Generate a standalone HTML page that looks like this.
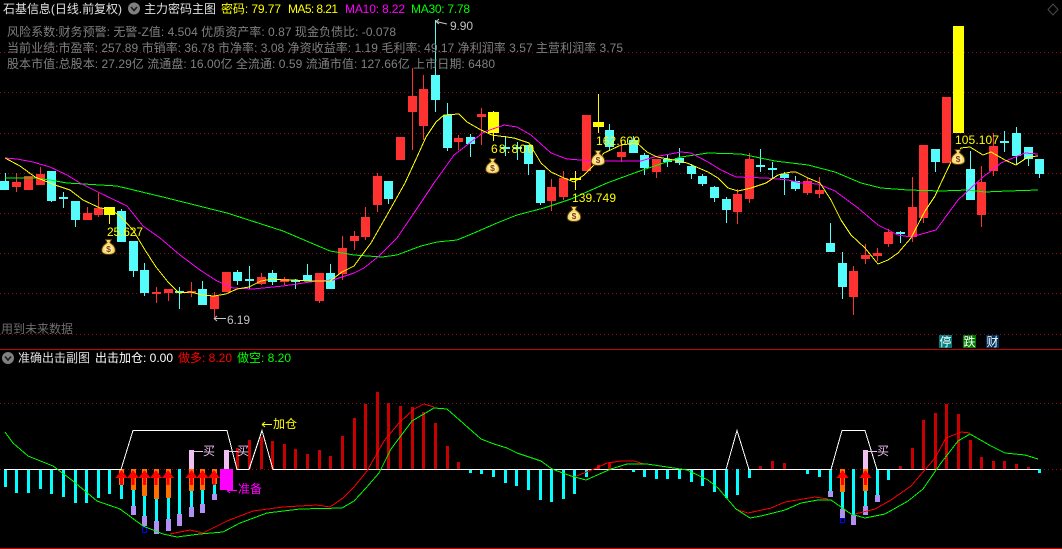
<!DOCTYPE html>
<html lang="zh-CN">
<head>
<meta charset="utf-8">
<title>主力密码主图</title>
<style>
html,body{margin:0;padding:0;background:#000;width:1062px;height:549px;overflow:hidden}
svg{display:block;position:absolute;left:0;top:0}
text{font-family:"Liberation Sans","WenQuanYi Zen Hei","Noto Sans CJK SC",sans-serif;font-size:12px}
.l{fill:none;stroke-width:1;shape-rendering:crispEdges}
.w{fill:none;stroke-width:1;shape-rendering:crispEdges}
.b{shape-rendering:crispEdges}
</style>
</head>
<body>
<svg width="1062" height="549" viewBox="0 0 1062 549" xmlns="http://www.w3.org/2000/svg">
<defs>
<g id="bag">
<path d="M-3 -7.500L3 -7.500L1.500 -4.500L5 -1.500Q7.500 2 6.500 5Q5 7.500 0 7.500Q-5 7.500 -6.500 5Q-7.500 2 -5 -1.500L-1.500 -4.500Z" fill="#F7D964" stroke="#5A3A14" stroke-width="1"/>
<ellipse cx="0" cy="2" rx="4.200" ry="4" fill="#FFF0A8"/>
<text x="0" y="5" text-anchor="middle" fill="#8B3A10" style="font-size:8.500px;font-weight:bold">$</text>
</g>
<g id="arw"><path class="b" fill="#FF0000" d="M0 470L6 478H1.500V485H-1.500V478H-6Z"/></g>
</defs>

<!-- grid -->
<path d="M0 52.500H1062M0 92.500H1062M0 133.500H1062M0 173.500H1062M0 213.500H1062M0 253.500H1062M0 293.500H1062M0 334.500H1062M0 403.500H1062M0 469.500H1062" stroke="#8A0F0F" stroke-width="1" stroke-dasharray="1 3" fill="none" shape-rendering="crispEdges"/>
<path d="M0 349.500H1062M0 548.500H1062" stroke="#C80000" stroke-width="1" fill="none" shape-rendering="crispEdges"/>

<!-- cyan wicks -->
<path class="w" stroke="#54FCFC" d="M5.500 173V190M51.500 171V202M63.500 192V208M75.500 201V227M121.500 209V242M133.500 241V277M144.500 263V296M179.500 287V309M202.500 281V305M237.500 270V285M249.500 266V289M272.500 270V285M295.500 279V289M307.500 264V281M330.500 264V289M388.500 181V204M435.500 20V112M447.500 103V151M470.500 134V157M505.500 136V156M517.500 142V160M528.500 145V175M540.500 170V205M609.500 124V150M633.500 136V153M644.500 153V175M667.500 154V167M679.500 148V165M691.500 164V179M702.500 174V186M714.500 186V202M726.500 197V223M760.500 149V172M772.500 162V179M784.500 172V195M795.500 176V191M830.500 223V252M842.500 252V299M900.500 231V243M935.500 149V172M970.500 151V200M1004.500 131V152M1016.500 127V164M1028.500 147V166M1039.500 159V178"/>
<!-- red wicks -->
<path class="w" stroke="#FF3232" d="M16.500 173V192M40.500 167V185M87.500 207V220M98.500 193V217M156.500 287V303M168.500 289V301M191.500 282V297M214.500 292V317M261.500 273V285M284.500 277V285M319.500 273V303M342.500 236V280M354.500 231V250M365.500 207V240M377.500 173V212M412.500 68V150M423.500 75V140M458.500 135V150M481.500 108V145M551.500 179V211M563.500 171V200M621.500 140V162M656.500 159V178M737.500 189V224M749.500 153V203M807.500 178V195M819.500 177V198M853.500 266V315M865.500 244V264M877.500 248V261M888.500 229V247M912.500 177V242M923.500 145V223M981.500 166V227M993.500 133V176"/>
<!-- yellow wicks -->
<path class="w" stroke="#FFFF00" d="M109.500 207V224M493.500 111V141M575.500 171V190M598.500 94V133"/>

<!-- cyan bodies -->
<path class="b" fill="#54FCFC" d="M0 181h9v9h-9zM47 171h9v30h-9zM59 197h9v2h-9zM71 201h9v19h-9zM117 211h9v31h-9zM129 241h9v30h-9zM140 270h9v23h-9zM175 291h9v2h-9zM198 289h9v16h-9zM233 272h9v9h-9zM245 279h9v2h-9zM268 273h9v9h-9zM291 280h9v2h-9zM303 275h9v6h-9zM326 273h9v16h-9zM384 181h9v18h-9zM431 75h9v25h-9zM443 115h9v33h-9zM466 137h9v7h-9zM501 147h9v2h-9zM513 147h9v2h-9zM524 145h9v19h-9zM536 170h9v33h-9zM605 130h9v17h-9zM629 140h9v13h-9zM640 155h9v13h-9zM663 159h9v3h-9zM675 158h9v5h-9zM687 166h9v8h-9zM698 176h9v8h-9zM710 187h9v11h-9zM722 199h9v11h-9zM756 165h9v2h-9zM768 168h9v2h-9zM780 174h9v4h-9zM791 181h9v8h-9zM826 243h9v9h-9zM838 263h9v24h-9zM896 232h9v2h-9zM931 149h9v13h-9zM966 169h9v31h-9zM1000 141h9v2h-9zM1012 133h9v23h-9zM1024 147h9v12h-9zM1035 159h9v15h-9z"/>
<!-- red bodies -->
<path class="b" fill="#FF3232" d="M12 182h9v5h-9zM24 176h9v14h-9zM36 174h9v11h-9zM83 213h9v7h-9zM94 208h9v7h-9zM152 292h9v2h-9zM164 289h9v4h-9zM187 291h9v2h-9zM210 296h9v13h-9zM222 272h9v20h-9zM257 277h9v7h-9zM280 279h9v3h-9zM315 273h9v28h-9zM338 248h9v26h-9zM350 236h9v5h-9zM361 217h9v20h-9zM373 176h9v29h-9zM396 137h9v23h-9zM408 96h9v16h-9zM419 89h9v37h-9zM454 138h9v4h-9zM477 114h9v3h-9zM547 187h9v14h-9zM559 178h9v19h-9zM582 115h9v56h-9zM617 152h9v5h-9zM652 159h9v13h-9zM733 194h9v18h-9zM745 159h9v40h-9zM803 181h9v12h-9zM815 190h9v4h-9zM849 271h9v26h-9zM861 255h9v4h-9zM873 253h9v3h-9zM884 232h9v12h-9zM908 207h9v30h-9zM919 145h9v73h-9zM942 97h9v66h-9zM977 182h9v33h-9zM989 146h9v25h-9z"/>
<!-- yellow bodies -->
<path class="b" fill="#FFFF00" d="M104 207h11v8h-11zM488 112h11v21h-11zM570 178h11v2h-11zM593 122h11v5h-11zM953 26h11v107h-11z"/>

<!-- MA30 -->
<polyline class="l" stroke="#00FF00" points="5,178 35,178 50,180 67,183 117,186 167,198 227,213 283,231 330,251 354,255 382,257 397,255 421,246 437,242 457,240 474,233 497,223 517,215 544,208 571,199 607,183 637,172 681,157 708,153 741,154 775,161 808,165 835,172 861,183 881,188 908,190 941,191 968,190 985,192 1008,191 1038,190"/>
<!-- MA10 -->
<polyline class="l" stroke="#FF00FF" points="5,158 17,159 33,162 50,167 67,175 80,183 100,193 127,206 143,226 160,238 180,255 200,270 217,281 233,288 253,289 283,286 317,281 333,280 354,273 364,268 379,256 397,238 414,213 434,183 454,155 484,132 504,125 517,127 531,135 551,153 567,159 594,161 641,161 654,157 681,152 691,153 708,162 721,170 736,177 766,178 788,180 801,183 818,184 835,191 858,208 878,225 898,235 911,237 936,230 958,200 983,177 1001,163 1025,153 1038,154"/>
<!-- MA5 -->
<polyline class="l" stroke="#FFFF00" points="5,158 20,166 35,177 50,183 58,186 70,190 83,200 100,208 110,209 120,216 133,230 145,250 156,267 168,282 179,293 191,292 202,295 214,296 226,294 237,289 249,287 261,281 272,279 284,280 295,280 307,281 319,281 330,281 342,272 354,266 362,255 371,243 387,215 405,183 417,157 426,137 436,122 444,115 459,114 467,122 481,130 492,135 514,138 529,143 541,163 551,172 564,178 574,182 584,175 594,165 604,153 621,145 637,143 647,152 657,157 674,160 687,163 708,172 718,178 723,183 728,188 738,191 751,188 766,183 778,175 791,172 796,172 808,178 820,183 831,200 841,220 851,235 865,248 878,264 888,260 898,253 911,238 925,211 935,196 941,183 951,162 961,148 970,147 983,155 991,152 1005,160 1016,165 1028,157 1038,156"/>

<!-- money bags -->
<use href="#bag" x="108.500" y="247"/>
<use href="#bag" x="492.500" y="166"/>
<use href="#bag" x="598" y="158"/>
<use href="#bag" x="574" y="214"/>
<use href="#bag" x="958" y="157"/>

<!-- price labels -->
<text x="107" y="236" fill="#FFFF00" textLength="36">25.627</text>
<text x="491" y="153" fill="#FFFF00" textLength="43">68.800</text>
<text x="596" y="145" fill="#FFFF00" textLength="44">162.609</text>
<text x="572" y="202" fill="#FFFF00" textLength="44">139.749</text>
<text x="955" y="144" fill="#FFFF00" textLength="44">105.107</text>
<path d="M436 21.500L447 24M436 21.500L439 19M436 21.500L439 24" stroke="#C8C8C8" fill="none"/>
<text x="450" y="30" fill="#C0C0C0" textLength="23">9.90</text>
<path d="M214 318.500H226M214 318.500L217 316M214 318.500L217 321" stroke="#C8C8C8" fill="none"/>
<text x="227" y="324" fill="#C0C0C0" textLength="23">6.19</text>

<!-- top header -->
<text x="3" y="13" fill="#E0E0E0" textLength="119">石基信息(日线.前复权)</text>
<circle cx="134" cy="8.500" r="6" fill="#808080"/>
<path d="M131 7L134 10.500L137 7" stroke="#1a1a1a" stroke-width="1.600" fill="none"/>
<text x="144" y="13" fill="#E0E0E0" textLength="72">主力密码主图</text>
<text x="221" y="13" fill="#FFFF00" textLength="60">密码: 79.77</text>
<text x="288" y="13" fill="#FFFF00" textLength="50">MA5: 8.21</text>
<text x="345" y="13" fill="#FF00FF" textLength="60">MA10: 8.22</text>
<text x="411" y="13" fill="#00FF00" textLength="59">MA30: 7.78</text>
<text x="7" y="36" fill="#808080" textLength="389">风险系数:财务预警: 无警-Z值: 4.504 优质资产率: 0.87 现金负债比: -0.078</text>
<text x="7" y="52" fill="#808080" textLength="616">当前业绩:市盈率: 257.89 市销率: 36.78 市净率: 3.08 净资收益率: 1.19 毛利率: 49.17 净利润率 3.57 主营利润率 3.75</text>
<text x="7" y="68" fill="#808080" textLength="488">股本市值:总股本: 27.29亿 流通盘: 16.00亿 全流通: 0.59 流通市值: 127.66亿 上市日期: 6480</text>
<path d="M1053 4L1058 9.500L1053 15L1048 9.500Z" fill="none" stroke="#4a4a4a"/>

<text x="1" y="333" fill="#6e6e6e" textLength="72">用到未来数据</text>

<!-- badges -->
<rect x="939" y="335" width="13" height="13" fill="#007C7C"/>
<rect x="963" y="335" width="13" height="13" fill="#007A00"/>
<rect x="986" y="335" width="13" height="13" fill="#00305E"/>
<text x="939.500" y="346" fill="#fff" textLength="12">停</text>
<text x="963.500" y="346" fill="#fff" textLength="12">跌</text>
<text x="986.500" y="346" fill="#fff" textLength="12">财</text>

<!-- sub header -->
<circle cx="8" cy="358" r="6" fill="#808080"/>
<path d="M5 356.500L8 360L11 356.500" stroke="#1a1a1a" stroke-width="1.600" fill="none"/>
<text x="18" y="362" fill="#E0E0E0" textLength="72">准确出击副图</text>
<text x="95" y="362" fill="#FFFFFF" textLength="78">出击加仓: 0.00</text>
<text x="178" y="362" fill="#FF0000" textLength="54">做多: 8.20</text>
<text x="237" y="362" fill="#00FF00" textLength="54">做空: 8.20</text>

<!-- sub chart bars: pink -->
<path class="b" fill="#F0C0F0" d="M189 450h5v19h-5zM224 450h5v19h-5zM863 450h5v19h-5z"/>
<!-- red bars -->
<path class="w" stroke="#C80000" style="stroke-width:3" d="M237.500 448V469M249.500 440V469M261.500 437V469M272.500 441V469M284.500 444V469M295.500 449V469M307.500 454V469M319.500 450V469M330.500 456V469M342.500 436V469M354.500 418V469M365.500 404V469M377.500 392V469M388.500 403V469M400.500 406V469M412.500 407V469M423.500 412V469M435.500 423V469M447.500 446V469M458.500 462V469M598.500 465V469M609.500 463V469M621.500 468V469M760.500 466V469M772.500 461V469M784.500 463V469M900.500 466V469M912.500 448V469M923.500 420V469M935.500 413V469M946.500 404V469M958.500 414V469M970.500 440V469M981.500 457V469M993.500 461V469M1004.500 461V469M1016.500 464V469M1028.500 467V469"/>
<!-- cyan bars -->
<path class="w" stroke="#00FFFF" style="stroke-width:3" d="M5.500 469V487M16.500 469V493M28.500 469V493M40.500 469V489M51.500 469V494M63.500 469V497M75.500 469V503M86.500 469V503M98.500 469V498M109.500 469V494M121.500 469V499M133.500 469V506M144.500 469V516M156.500 469V521M168.500 469V519M179.500 469V514M191.500 469V507M202.500 469V504M214.500 469V494M470.500 469V473M481.500 469V474M493.500 469V477M505.500 469V483M516.500 469V486M528.500 469V490M540.500 469V500M551.500 469V502M563.500 469V499M574.500 469V494M586.500 469V477M633.500 469V472M644.500 469V477M656.500 469V479M667.500 469V479M679.500 469V479M691.500 469V482M702.500 469V486M714.500 469V492M726.500 469V498M737.500 469V495M749.500 469V478M807.500 469V474M819.500 469V477M830.500 469V491M842.500 469V509M853.500 469V515M865.500 469V506M877.500 469V495M888.500 469V480M1039.500 469V473"/>
<!-- purple -->
<path class="b" fill="#B090F0" d="M131 506h5v9h-5zM142 516h5v10h-5zM154 521h5v13h-5zM166 519h5v12h-5zM177 514h5v12h-5zM189 507h5v10h-5zM200 504h5v9h-5zM212 494h5v6h-5zM828 491h5v6h-5zM840 509h5v9h-5zM851 515h5v10h-5zM863 506h5v9h-5zM875 495h5v7h-5z"/>
<!-- orange -->
<path class="b" fill="#FF7000" d="M119 469h5v16h-5zM131 469h5v21h-5zM142 469h5v27h-5zM154 469h5v30h-5zM166 469h5v29h-5zM189 469h5v22h-5zM200 469h5v21h-5zM212 469h5v15h-5zM840 469h5v23h-5zM863 469h5v22h-5z"/>
<!-- magenta block -->
<rect class="b" x="220" y="469" width="13" height="21" fill="#FF00FF"/>
<!-- blue markers -->
<path class="b" fill="none" stroke="#0000FF" d="M142.500 527.500h4v5h-4zM840.500 518.500h4v4h-4z"/>
<!-- arrows -->
<use href="#arw" x="121.500"/><use href="#arw" x="133"/><use href="#arw" x="144.500"/><use href="#arw" x="156"/><use href="#arw" x="168"/><use href="#arw" x="191.500"/><use href="#arw" x="202.500"/><use href="#arw" x="214"/><use href="#arw" x="842.500"/><use href="#arw" x="865.500"/>

<!-- zero / trapezoid white line -->
<polyline fill="none" stroke="#FFFFFF" stroke-width="1" shape-rendering="crispEdges" points="4,469.500 121,469.500 133,430.500 227,430.500 237,469.500 249,469.500 262,430.500 273,469.500 726,469.500 737,430.500 749,469.500 831,469.500 842,430.500 865,430.500 877,469.500 1039,469.500"/>

<!-- sub lines -->
<polyline class="l" stroke="#FF0000" points="170,534 190,530 203,533 227,521 253,511 283,507 317,505 330,507 343,498 354,487 367,471 384,441 399,423 414,409 424,404 434,407"/>
<polyline class="l" stroke="#FF0000" points="574,477 594,469 607,463 621,461 634,461 644,464"/>
<polyline class="l" stroke="#FF0000" points="738,510 748,513 771,508 785,502 815,497 828,499"/>
<polyline class="l" stroke="#FF0000" points="855,514 875,509 891,500 911,486 935,458 946,438 961,432 970,433"/>
<polyline class="l" stroke="#00FF00" points="5,432 13,443 28,456 53,466 73,481 97,501 120,509 143,526 163,534 177,537 200,534 223,532 240,523 267,513 300,509 342,508 354,501 366,488 379,473 391,449 412,421 434,408 447,409 464,424 481,439 494,444 507,448 517,453 541,461 552,469 571,476 586,480 611,469 627,464 647,464 667,467 687,470 708,480 718,488 736,509 750,518 761,516 785,510 801,503 818,500 831,500 851,514 865,518 885,514 908,501 923,489 941,463 958,441 970,434 991,446 1005,453 1025,455 1038,459"/>

<!-- sub labels -->
<path d="M193 451.500H203M229 451.500H238M868 451.500H877" stroke="#F0C0F0" fill="none" shape-rendering="crispEdges"/>
<text x="203" y="455" fill="#F0C0F0" textLength="12">买</text>
<text x="237" y="455" fill="#F0C0F0" textLength="12">买</text>
<text x="877" y="455" fill="#F0C0F0" textLength="12">买</text>
<path d="M262 424.500H272M262 424.500L265 422M262 424.500L265 427" stroke="#FFFF00" fill="none"/>
<text x="273" y="428" fill="#FFFF00" textLength="24">加仓</text>
<path d="M227 490.500H237M227 490.500L230 488M227 490.500L230 493" stroke="#FF00FF" fill="none"/>
<text x="238" y="493" fill="#FF00FF" textLength="24">准备</text>
</svg>
</body>
</html>
